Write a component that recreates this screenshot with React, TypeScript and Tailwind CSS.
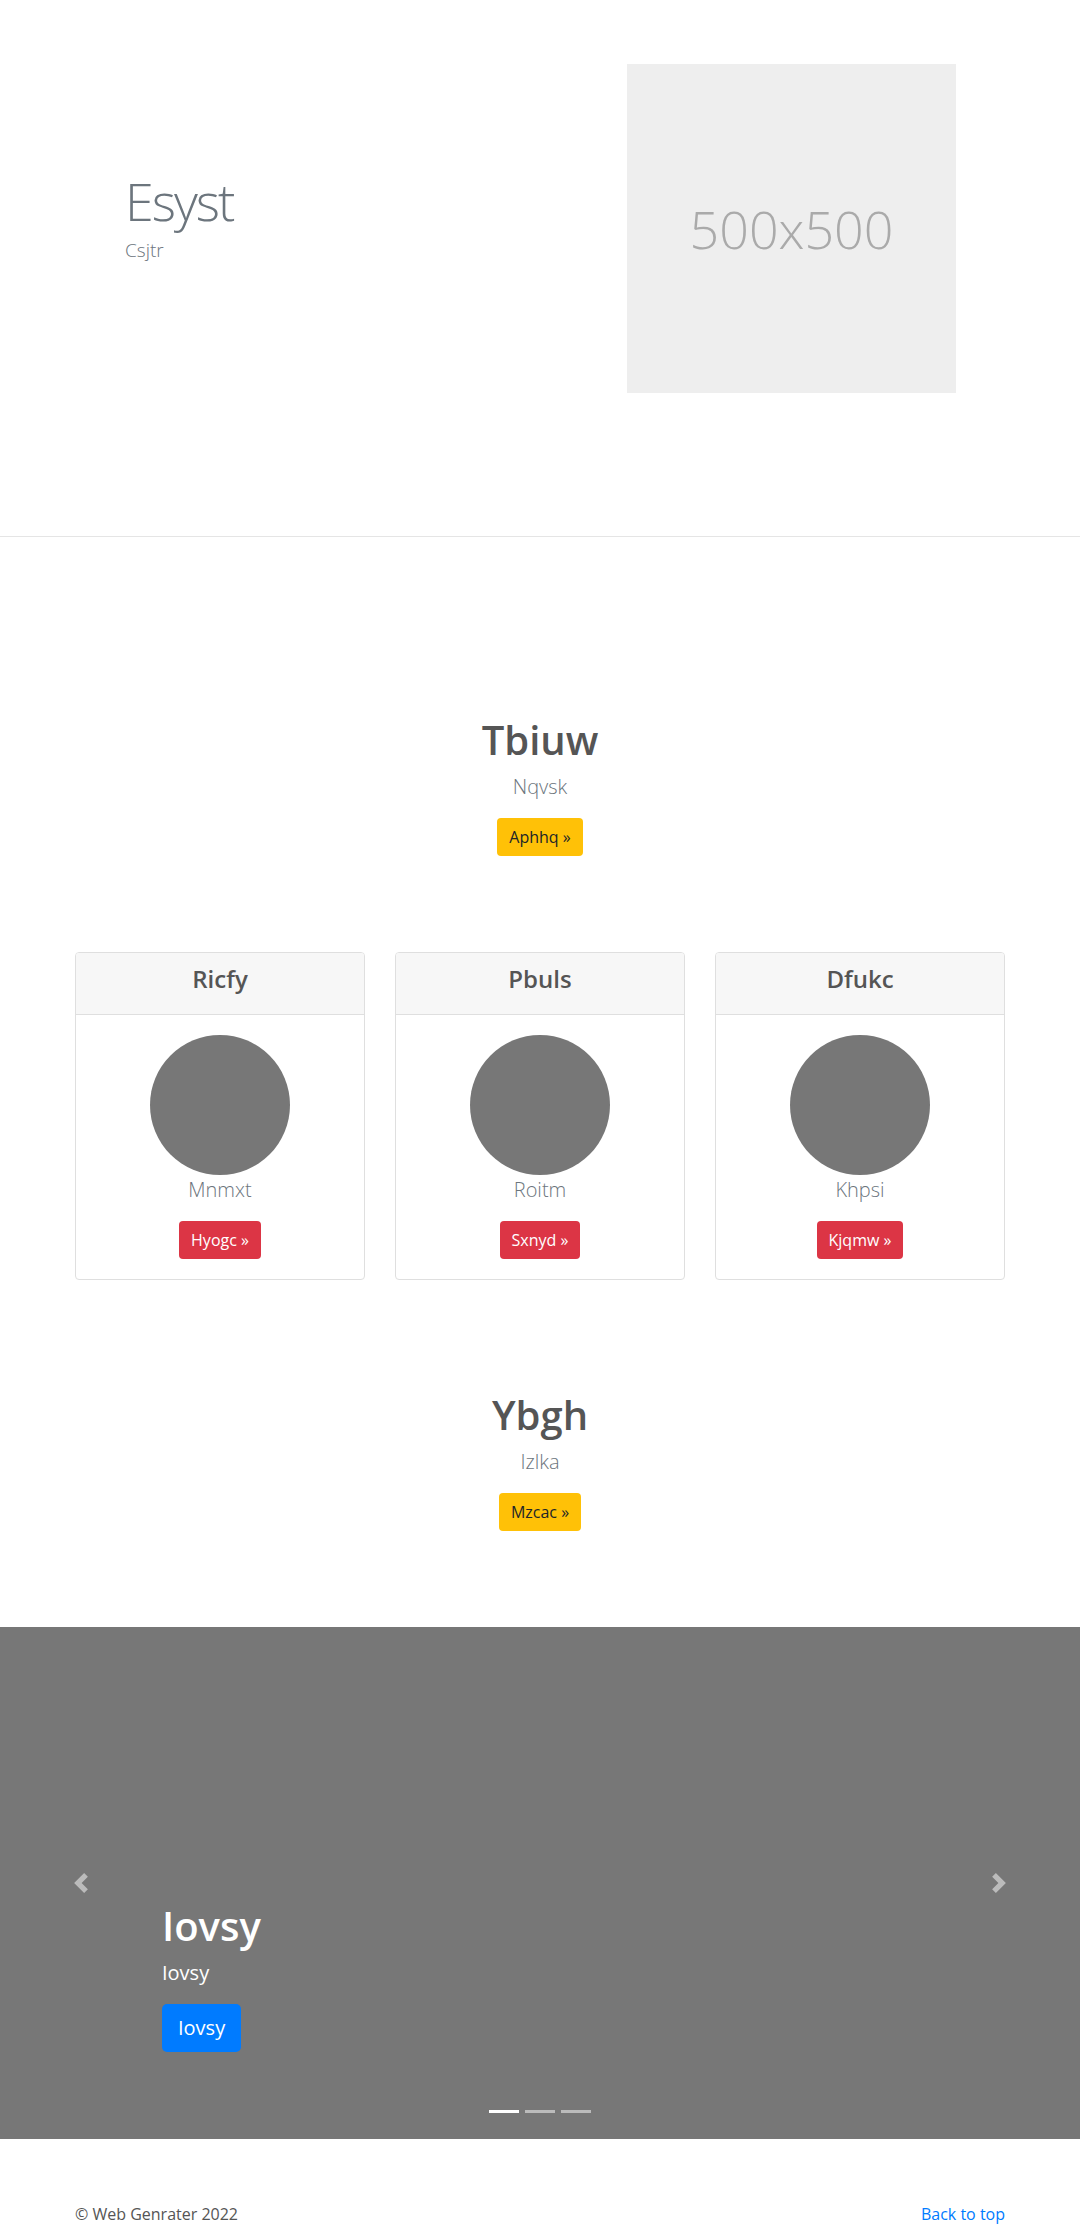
const cards = [
  { title: "Ricfy", text: "Mnmxt", button: "Hyogc »" },
  { title: "Pbuls", text: "Roitm", button: "Sxnyd »" },
  { title: "Dfukc", text: "Khpsi", button: "Kjqmw »" },
];

function Chevron({ dir }: { dir: "left" | "right" }) {
  return (
    <svg width="20" height="20" viewBox="0 0 8 8" fill="#fff">
      {dir === "left" ? (
        <path d="M5.25 0l-4 4 4 4 1.5-1.5L4.25 4l2.5-2.5L5.25 0z" />
      ) : (
        <path d="M2.75 0l-1.5 1.5L3.75 4l-2.5 2.5L2.75 8l4-4-4-4z" />
      )}
    </svg>
  );
}

function Intro({ title, text, button }: { title: string; text: string; button: string }) {
  return (
    <div className="flex flex-col items-center text-center">
      <h1 className="text-[40px] leading-[1.2] font-semibold text-[#555] mb-2">{title}</h1>
      <p className="text-[20px] leading-[1.5] font-light text-[#6c757d] mb-4">{text}</p>
      <a className="h-[38px] px-3 flex items-center rounded bg-[#ffc107] text-[#212529] text-base">
        {button}
      </a>
    </div>
  );
}

export default function App() {
  return (
    <div className="min-h-screen bg-white font-['Open_Sans',sans-serif] text-[#212529]">
      {/* Hero */}
      <section className="border-b border-[#e5e5e5]">
        <div className="w-[930px] mx-auto pt-[64px] pb-[143px] flex items-center justify-between">
          <div className="pl-[50px] -mt-[22px]">
            <h1 className="text-[52px] leading-[1.2] font-light tracking-[-2px] text-[#6c757d]">Esyst</h1>
            <p className="text-[19px] leading-[1.5] font-light text-[#6c757d] mt-[4px]">Csjtr</p>
          </div>
          <div className="w-[329px] h-[329px] mr-[49px] bg-[#eeeeee] flex items-center justify-center">
            <span className="text-[52px] font-light text-[#aaaaaa]">500x500</span>
          </div>
        </div>
      </section>

      {/* Marketing */}
      <main className="w-[930px] mx-auto pt-[179px]">
        <Intro title="Tbiuw" text="Nqvsk" button="Aphhq »" />

        <div className="grid grid-cols-3 gap-[30px] mt-[96px]">
          {cards.map((c) => (
            <div key={c.title} className="border border-[#dfdfdf] rounded bg-white overflow-hidden">
              <div className="bg-[#f7f7f7] border-b border-[#dfdfdf] px-5 pt-3 pb-3 text-center">
                <h4 className="text-[24px] leading-[1.2] font-semibold text-[#555] mb-2">{c.title}</h4>
              </div>
              <div className="p-5 flex flex-col items-center">
                <div className="w-[140px] h-[140px] rounded-full bg-[#777777]" />
                <p className="text-[20px] leading-[1.5] font-light text-[#6c757d] mb-4">{c.text}</p>
                <a className="h-[38px] px-3 flex items-center rounded bg-[#dc3545] text-white text-base">
                  {c.button}
                </a>
              </div>
            </div>
          ))}
        </div>

        <div className="mt-[111px]">
          <Intro title="Ybgh" text="Izlka" button="Mzcac »" />
        </div>
      </main>

      {/* Carousel */}
      <section className="relative mt-[96px] h-[512px] bg-[#777777] overflow-hidden">
        <div className="absolute inset-y-0 left-0 w-[15%] flex items-center justify-center opacity-50">
          <Chevron dir="left" />
        </div>
        <div className="absolute inset-y-0 right-0 w-[15%] flex items-center justify-center opacity-50">
          <Chevron dir="right" />
        </div>
        <div className="absolute left-[15%] right-[15%] bottom-[51px] pt-5 pb-5 text-white">
          <h1 className="text-[40px] leading-[1.2] font-semibold mb-2">Iovsy</h1>
          <p className="text-[20px] leading-[1.5] mb-4">Iovsy</p>
          <p className="mb-4">
            <a className="inline-flex h-[48px] px-4 items-center rounded-[5px] bg-[#007bff] text-white text-[20px]">
              Iovsy
            </a>
          </p>
        </div>
        <div className="absolute bottom-[26px] left-0 right-0 flex justify-center gap-[6px]">
          <span className="w-[30px] h-[3px] bg-white" />
          <span className="w-[30px] h-[3px] bg-white opacity-50" />
          <span className="w-[30px] h-[3px] bg-white opacity-50" />
        </div>
      </section>

      {/* Footer */}
      <footer className="w-[930px] mx-auto mt-[63px] pb-4 flex justify-between text-base leading-[1.5]">
        <p className="text-[#555]">© Web Genrater 2022</p>
        <a className="text-[#007bff]">Back to top</a>
      </footer>
    </div>
  );
}
